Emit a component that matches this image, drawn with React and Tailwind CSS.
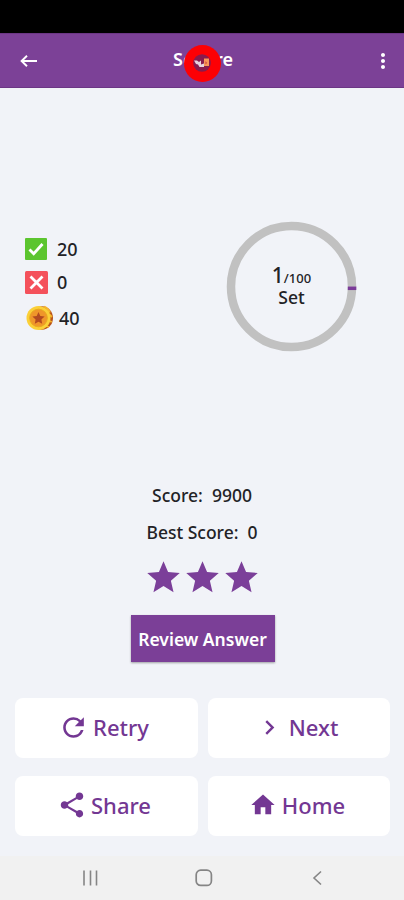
import React from "react";
import { MdChevronRight, MdHome, MdMoreVert, MdRefresh, MdShare, MdStar } from "react-icons/md";

const CheckIcon = () => (
    <svg width="22" height="22" viewBox="0 0 22 22">
        <rect width="22" height="22" rx="1" fill="#5cc52f" />
        <path d="M4.500 11.500l4.200 4.300L17.500 6" fill="none" stroke="#fff" strokeWidth="2.800" />
    </svg>
);

const CrossIcon = () => (
    <svg width="23" height="23" viewBox="0 0 23 23">
        <rect width="23" height="23" rx="1.500" fill="#f4515b" />
        <path d="M5.500 5.500l12 12M17.500 5.500l-12 12" fill="none" stroke="#fff" strokeWidth="2.800" />
    </svg>
);

const CoinIcon = () => (
    <svg width="28" height="26" viewBox="0 0 28 26">
        <ellipse cx="17" cy="13" rx="11" ry="11.800" fill="#b9541b" />
        <path d="M19 1.500a11 11 0 0 1 6 6M24 9l3 3M24.500 16l2.300 1M21 21l3 1" stroke="#f6b52c" strokeWidth="1.800" fill="none" />
        <circle cx="13.500" cy="13" r="12" fill="#fbd038" />
        <circle cx="13.500" cy="13" r="8.800" fill="#f0962a" stroke="#e9a91f" />
        <path d="M13.500 7l1.800 4 4.300.5-3.200 3 .8 4.300-3.700-2.100-3.700 2.100.8-4.300-3.200-3 4.300-.5z" fill="#b34a20" />
    </svg>
);

const results = [
    { icon: <CheckIcon />, value: "20", row: "h-[33px] gap-[10px]" },
    { icon: <CrossIcon />, value: "0", row: "h-[34px] gap-[9px]" },
    { icon: <CoinIcon />, value: "40", row: "h-[37px] gap-[6px]" },
];

const actions = [
    { icon: <MdRefresh size={31} />, label: "Retry", gap: "gap-[4px] pr-[6px]" },
    { icon: <MdChevronRight size={29} />, label: "Next", gap: "gap-[5px] pr-[5px]" },
    { icon: <MdShare size={30} />, label: "Share", gap: "gap-[4px] pr-[5px]" },
    { icon: <MdHome size={28} />, label: "Home", gap: "gap-[5px] pr-[4px]" },
];

export default function App() {
    return (
        <div className="flex h-[900px] w-[404px] flex-col overflow-hidden bg-[#f1f3f8] font-['Noto_Sans',sans-serif] text-[#222226]">
            <div className="h-[33px] shrink-0 bg-black" />

            {/* Header */}
            <header className="flex h-[55px] shrink-0 items-center justify-between border-y border-[#6c3685] bg-[#7c4197] pr-[9px] pl-[20px] text-white">
                <svg width="18" height="14" viewBox="0 0 18 14" fill="none" stroke="currentColor" strokeWidth="1.900">
                    <path d="M17 7H1.800M7 1.800L1.600 7 7 12.200" />
                </svg>
                <div className="relative mr-[3px] flex h-[36px] items-center">
                    <h1 className="-mt-[3px] flex text-[18px] leading-[24px] font-semibold">
                        <span>Sc</span>
                        <span className="mx-[6px]">o</span>
                        <span>re</span>
                    </h1>
                    {/* Floating recorder bubble */}
                    <div className="absolute top-[2px] left-[11px] flex h-[37px] w-[37px] items-center justify-center rounded-full bg-[#fd0004]">
                        <svg width="18" height="18" viewBox="0 0 18 18">
                            <circle cx="9" cy="9" r="8.800" fill="#871b4d" />
                            <path d="M1 6.500h3l2 1.500 2-1.500v4l3-1v3.500H6.500L5 10.500 3 10z" fill="#e6d3de" />
                            <path d="M11 4.500h5v7.500h-5z" fill="#f99757" />
                            <path d="M12.500 7l1.500 2-1.500 1.500z" fill="#c93e42" />
                        </svg>
                    </div>
                </div>
                <MdMoreVert size={24} />
            </header>

            <main className="flex flex-1 flex-col">
                {/* Stats and progress ring */}
                <section className="mt-[133px] flex justify-between pr-[47px] pl-[25px]">
                    <div className="flex flex-col pt-[11px]">
                        {results.map((item) => (
                            <div key={item.value} className={`flex items-center ${item.row}`}>
                                {item.icon}
                                <span className="text-[18px] leading-[24px] font-medium">{item.value}</span>
                            </div>
                        ))}
                    </div>
                    <div className="relative h-[131px] w-[131px]">
                        <svg width="131" height="131" viewBox="0 0 131 131">
                            <circle cx="65.500" cy="65.500" r="60.500" fill="none" stroke="#c1c1c1" strokeWidth="8.500" />
                            <path d="M121.800 67.300h8.500" stroke="#7b3b99" strokeWidth="3.500" />
                        </svg>
                        <div className="absolute inset-0 flex flex-col items-center pt-[43px] font-medium">
                            <div className="flex h-[22px] items-baseline leading-[22px]">
                                <span className="text-[21px]">1</span>
                                <span className="text-[13px]">/100</span>
                            </div>
                            <span className="text-[17.5px] leading-[23px]">Set</span>
                        </div>
                    </div>
                </section>

                {/* Score summary */}
                <section className="mt-[131px] flex flex-col items-center">
                    <p className="text-[17.5px] leading-[24px] font-medium whitespace-pre">Score:  9900</p>
                    <p className="mt-[13px] text-[17.5px] leading-[24px] font-medium whitespace-pre">Best Score:  0</p>
                    <div className="mt-[14px] flex text-[#7b3f99]">
                        <MdStar size={39} />
                        <MdStar size={39} />
                        <MdStar size={39} />
                    </div>
                    <button className="mt-[18px] ml-px h-[47px] w-[144px] bg-[#7b3f97] pt-[2px] text-[17.5px] font-semibold whitespace-nowrap text-white shadow-[0_1px_2px_rgba(0,0,0,0.35)]">
                        Review Answer
                    </button>
                </section>

                <section className="mt-[36px] grid grid-cols-[183px_182px] gap-x-[10px] gap-y-[18px] pl-[15px]">
                    {actions.map((action) => (
                        <button key={action.label} className={`flex h-[60px] items-center justify-center rounded-[8px] bg-white pb-[2px] text-[22px] font-medium text-[#733793] ${action.gap}`}>
                            {action.icon}
                            <span>{action.label}</span>
                        </button>
                    ))}
                </section>
            </main>

            {/* System navigation */}
            <nav className="flex h-[44px] shrink-0 items-center bg-[#f1f1f1] pl-[82px] text-[#858585]">
                <svg width="17" height="16" viewBox="0 0 17 16" stroke="currentColor" strokeWidth="1.600">
                    <path d="M2 .5v15M8.500 .5v15M14.500 .5v15" />
                </svg>
                <svg className="ml-[96px]" width="18" height="18" viewBox="0 0 18 18" fill="none" stroke="currentColor" strokeWidth="1.700">
                    <rect x="1.200" y="1.200" width="15.200" height="15.200" rx="4.500" />
                </svg>
                <svg className="ml-[99px]" width="11" height="16" viewBox="0 0 11 16" fill="none" stroke="currentColor" strokeWidth="1.600">
                    <path d="M9 1.500L2 8l7 6.500" />
                </svg>
            </nav>
        </div>
    );
}
